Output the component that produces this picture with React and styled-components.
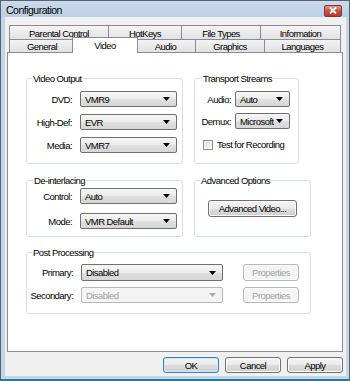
import styled, { createGlobalStyle } from "styled-components";

const GlobalStyle = createGlobalStyle`
  html, body {
    margin: 0;
    padding: 0;
    background: #ffffff;
  }
  body {
    font-family: "Liberation Sans", Arial, sans-serif;
    font-size: 9.5px;
    letter-spacing: -0.55px;
    color: #000;
  }
`;

const Window = styled.div`
  width: 350px;
  height: 381px;
  box-sizing: border-box;
  display: flex;
  flex-direction: column;
  background: #c4d5e8;
  border: 1px solid #56626e;
  border-bottom: 2px solid #1f7f9c;
`;

const TitleBar = styled.div`
  height: 16px;
  flex-shrink: 0;
  display: flex;
  align-items: center;
  justify-content: space-between;
  padding: 0 7px 0 5px;
  background: linear-gradient(#cbdaec, #bccfe5);
`;

const Title = styled.span`
  font-size: 10.5px;
  letter-spacing: -0.5px;
  color: #000;
  margin-top: 2px;
`;

const CloseButton = styled.div`
  width: 16px;
  height: 10px;
  margin-top: 3px;
  display: flex;
  align-items: center;
  justify-content: center;
  border: 1px solid #7d3a35;
  border-radius: 2px;
  background: linear-gradient(#e29a8c, #c9503f 50%, #b83a2a);
`;

const Client = styled.div`
  flex: 1;
  margin: 0 3px 3px 4px;
  padding: 8px 3px 0 2px;
  background: #f0f0f0;
  display: flex;
  flex-direction: column;
`;

const TabRow = styled.div`
  display: flex;
  align-items: flex-start;
  height: ${(p) => p.$h}px;
  padding-left: 2px;
`;

const Tab = styled.div`
  box-sizing: border-box;
  width: ${(p) => p.$w}px;
  height: ${(p) => p.$h}px;
  margin-left: -1px;
  &:first-child {
    margin-left: 0;
  }
  border: 1px solid #898c95;
  border-bottom: none;
  background: linear-gradient(#f4f4f4, #e1e1e1);
  display: flex;
  align-items: center;
  justify-content: center;
  line-height: 11px;
  white-space: nowrap;
  position: relative;
`;

const ActiveTab = styled(Tab)`
  height: ${(p) => p.$h + 3}px;
  margin: -2px -2px 0 -3px;
  background: #ffffff;
  z-index: 2;
  align-items: flex-start;
  padding-top: 2px;
`;

const Panel = styled.div`
  box-sizing: border-box;
  height: 300px;
  background: #ffffff;
  border: 1px solid #898c95;
  position: relative;
  z-index: 1;
  padding: 25px 0 0 18px;
  display: flex;
  flex-direction: column;
`;

const GroupRow = styled.div`
  display: flex;
  gap: 11px;
  margin-top: ${(p) => p.$mt || 0}px;
  height: ${(p) => p.$h}px;
`;

const GroupBox = styled.div`
  box-sizing: border-box;
  position: relative;
  width: ${(p) => p.$w}px;
  height: 100%;
  border: 1px solid #d5dfe5;
  border-radius: 3px;
  padding: ${(p) => p.$pad};
  display: flex;
  flex-direction: column;
  justify-content: ${(p) => (p.$center ? "center" : "flex-start")};
  align-items: ${(p) => (p.$center ? "center" : "stretch")};
`;

const Legend = styled.span`
  position: absolute;
  top: -7px;
  left: ${(p) => p.$left || 5}px;
  padding: 0 1px;
  background: #ffffff;
  line-height: 13px;
  white-space: nowrap;
`;

const FieldGrid = styled.div`
  display: grid;
  grid-template-columns: ${(p) => p.$cols};
  column-gap: ${(p) => p.$colGap}px;
  row-gap: ${(p) => p.$rowGap}px;
  align-items: center;
`;

const Label = styled.span`
  text-align: right;
  white-space: nowrap;
`;

const Combo = styled.div`
  box-sizing: border-box;
  height: ${(p) => p.$h || 16}px;
  border: 1px solid ${(p) => (p.$disabled ? "#b4b8bb" : "#707070")};
  border-radius: 2px;
  background: ${(p) =>
    p.$disabled
      ? "#f4f4f4"
      : "linear-gradient(#f6f6f6, #ececec 50%, #e0e0e0 51%, #d6d6d6)"};
  color: ${(p) => (p.$disabled ? "#a3a3a3" : "#000")};
  display: flex;
  align-items: center;
  justify-content: space-between;
  padding: 0 6px 0 4px;
  white-space: nowrap;
`;

const Arrow = styled.svg`
  width: 7px;
  height: 4px;
  flex-shrink: 0;
`;

const Button = styled.div`
  box-sizing: border-box;
  width: ${(p) => p.$w}px;
  height: ${(p) => p.$h || 16}px;
  margin-left: ${(p) => p.$ml || 0}px;
  border: 1px solid
    ${(p) => (p.$disabled ? "#b4b8bb" : p.$default ? "#3c7fb1" : "#707070")};
  border-radius: 3px;
  background: ${(p) =>
    p.$disabled
      ? "#f4f4f4"
      : "linear-gradient(#f4f4f4, #ebebeb 50%, #dddddd 51%, #d0d0d0)"};
  box-shadow: ${(p) =>
    p.$default ? "inset 0 0 0 1px #cfeaf9" : "inset 0 0 0 1px #fbfbfb"};
  color: ${(p) => (p.$disabled ? "#a3a3a3" : "#000")};
  display: flex;
  align-items: center;
  justify-content: center;
  white-space: nowrap;
`;

const CheckRow = styled.div`
  display: flex;
  align-items: center;
  gap: 4px;
  margin-top: ${(p) => p.$mt}px;
  padding-left: 8px;
  white-space: nowrap;
`;

const CheckBox = styled.div`
  box-sizing: border-box;
  width: 10px;
  height: 10px;
  border: 1px solid #8e8f8f;
  background: linear-gradient(135deg, #dcdcdc, #fbfbfb);
  box-shadow: inset 0 0 0 1px #f4f4f4;
`;

const Footer = styled.div`
  display: flex;
  justify-content: flex-end;
  gap: 6px;
  padding-top: 5px;
`;

const row1 = [
  ["Parental Control", 100],
  ["HotKeys", 74],
  ["File Types", 80],
  ["Information", 81],
];

const row2 = [
  ["General", 66],
  ["Video", 66, true],
  ["Audio", 61],
  ["Graphics", 70],
  ["Languages", 77],
];

const DropDown = ({ value, h, disabled }) => (
  <Combo $h={h} $disabled={disabled}>
    <span>{value}</span>
    <Arrow viewBox="0 0 7 4">
      <polygon points="0,0 7,0 3.5,4" fill={disabled ? "#a8a8a8" : "#000"} />
    </Arrow>
  </Combo>
);

const App = () => {
  return (
    <>
      <GlobalStyle />
      <Window>
        <TitleBar>
          <Title>Configuration</Title>
          <CloseButton>
            <svg width="8" height="7" viewBox="0 0 8 7">
              <path d="M1 0.5 L7 6.5 M7 0.5 L1 6.5" stroke="#fff" strokeWidth="1.8" />
            </svg>
          </CloseButton>
        </TitleBar>
        <Client>
          <TabRow $h={14}>
            {row1.map(([name, w]) => (
              <Tab key={name} $w={w} $h={15}>
                {name}
              </Tab>
            ))}
          </TabRow>
          <TabRow $h={13}>
            {row2.map(([name, w, active]) =>
              active ? (
                <ActiveTab key={name} $w={w} $h={13}>
                  {name}
                </ActiveTab>
              ) : (
                <Tab key={name} $w={w} $h={13}>
                  {name}
                </Tab>
              )
            )}
          </TabRow>
          <Panel>
            <GroupRow $h={86}>
              <GroupBox $w={157} $pad="12px 0 0 0">
                <Legend $left={5}>Video Output</Legend>
                <FieldGrid $cols="45px 97px" $colGap={8} $rowGap={7}>
                  <Label>DVD:</Label>
                  <DropDown value="VMR9" />
                  <Label>High-Def:</Label>
                  <DropDown value="EVR" />
                  <Label>Media:</Label>
                  <DropDown value="VMR7" />
                </FieldGrid>
              </GroupBox>
              <GroupBox $w={105} $pad="12px 0 0 0">
                <Legend $left={7}>Transport Streams</Legend>
                <FieldGrid $cols="36px 55px" $colGap={4} $rowGap={6}>
                  <Label>Audio:</Label>
                  <DropDown value="Auto" />
                  <Label>Demux:</Label>
                  <DropDown value="Microsoft" />
                </FieldGrid>
                <CheckRow $mt={10}>
                  <CheckBox />
                  <span>Test for Recording</span>
                </CheckRow>
              </GroupBox>
            </GroupRow>
            <GroupRow $h={57} $mt={16}>
              <GroupBox $w={157} $pad="7px 0 0 0">
                <Legend $left={6}>De-interlacing</Legend>
                <FieldGrid $cols="45px 97px" $colGap={8} $rowGap={9}>
                  <Label>Control:</Label>
                  <DropDown value="Auto" />
                  <Label>Mode:</Label>
                  <DropDown value="VMR Default" />
                </FieldGrid>
              </GroupBox>
              <GroupBox $w={117} $pad="0" $center>
                <Legend $left={5}>Advanced Options</Legend>
                <Button $w={89} $h={17}>
                  Advanced Video...
                </Button>
              </GroupBox>
            </GroupRow>
            <GroupRow $h={62} $mt={15}>
              <GroupBox $w={285} $pad="11px 0 0 0">
                <Legend $left={5}>Post Processing</Legend>
                <FieldGrid $cols="46px 142px 68px" $colGap={8} $rowGap={6}>
                  <Label>Primary:</Label>
                  <DropDown value="Disabled" h={17} />
                  <Button $w={56} $h={17} $ml={12} $disabled>
                    Properties
                  </Button>
                  <Label>Secondary:</Label>
                  <DropDown value="Disabled" disabled />
                  <Button $w={56} $ml={12} $disabled>
                    Properties
                  </Button>
                </FieldGrid>
              </GroupBox>
            </GroupRow>
          </Panel>
          <Footer>
            <Button $w={56} $default>
              OK
            </Button>
            <Button $w={56}>Cancel</Button>
            <Button $w={56}>Apply</Button>
          </Footer>
        </Client>
      </Window>
    </>
  );
};

export default App;
